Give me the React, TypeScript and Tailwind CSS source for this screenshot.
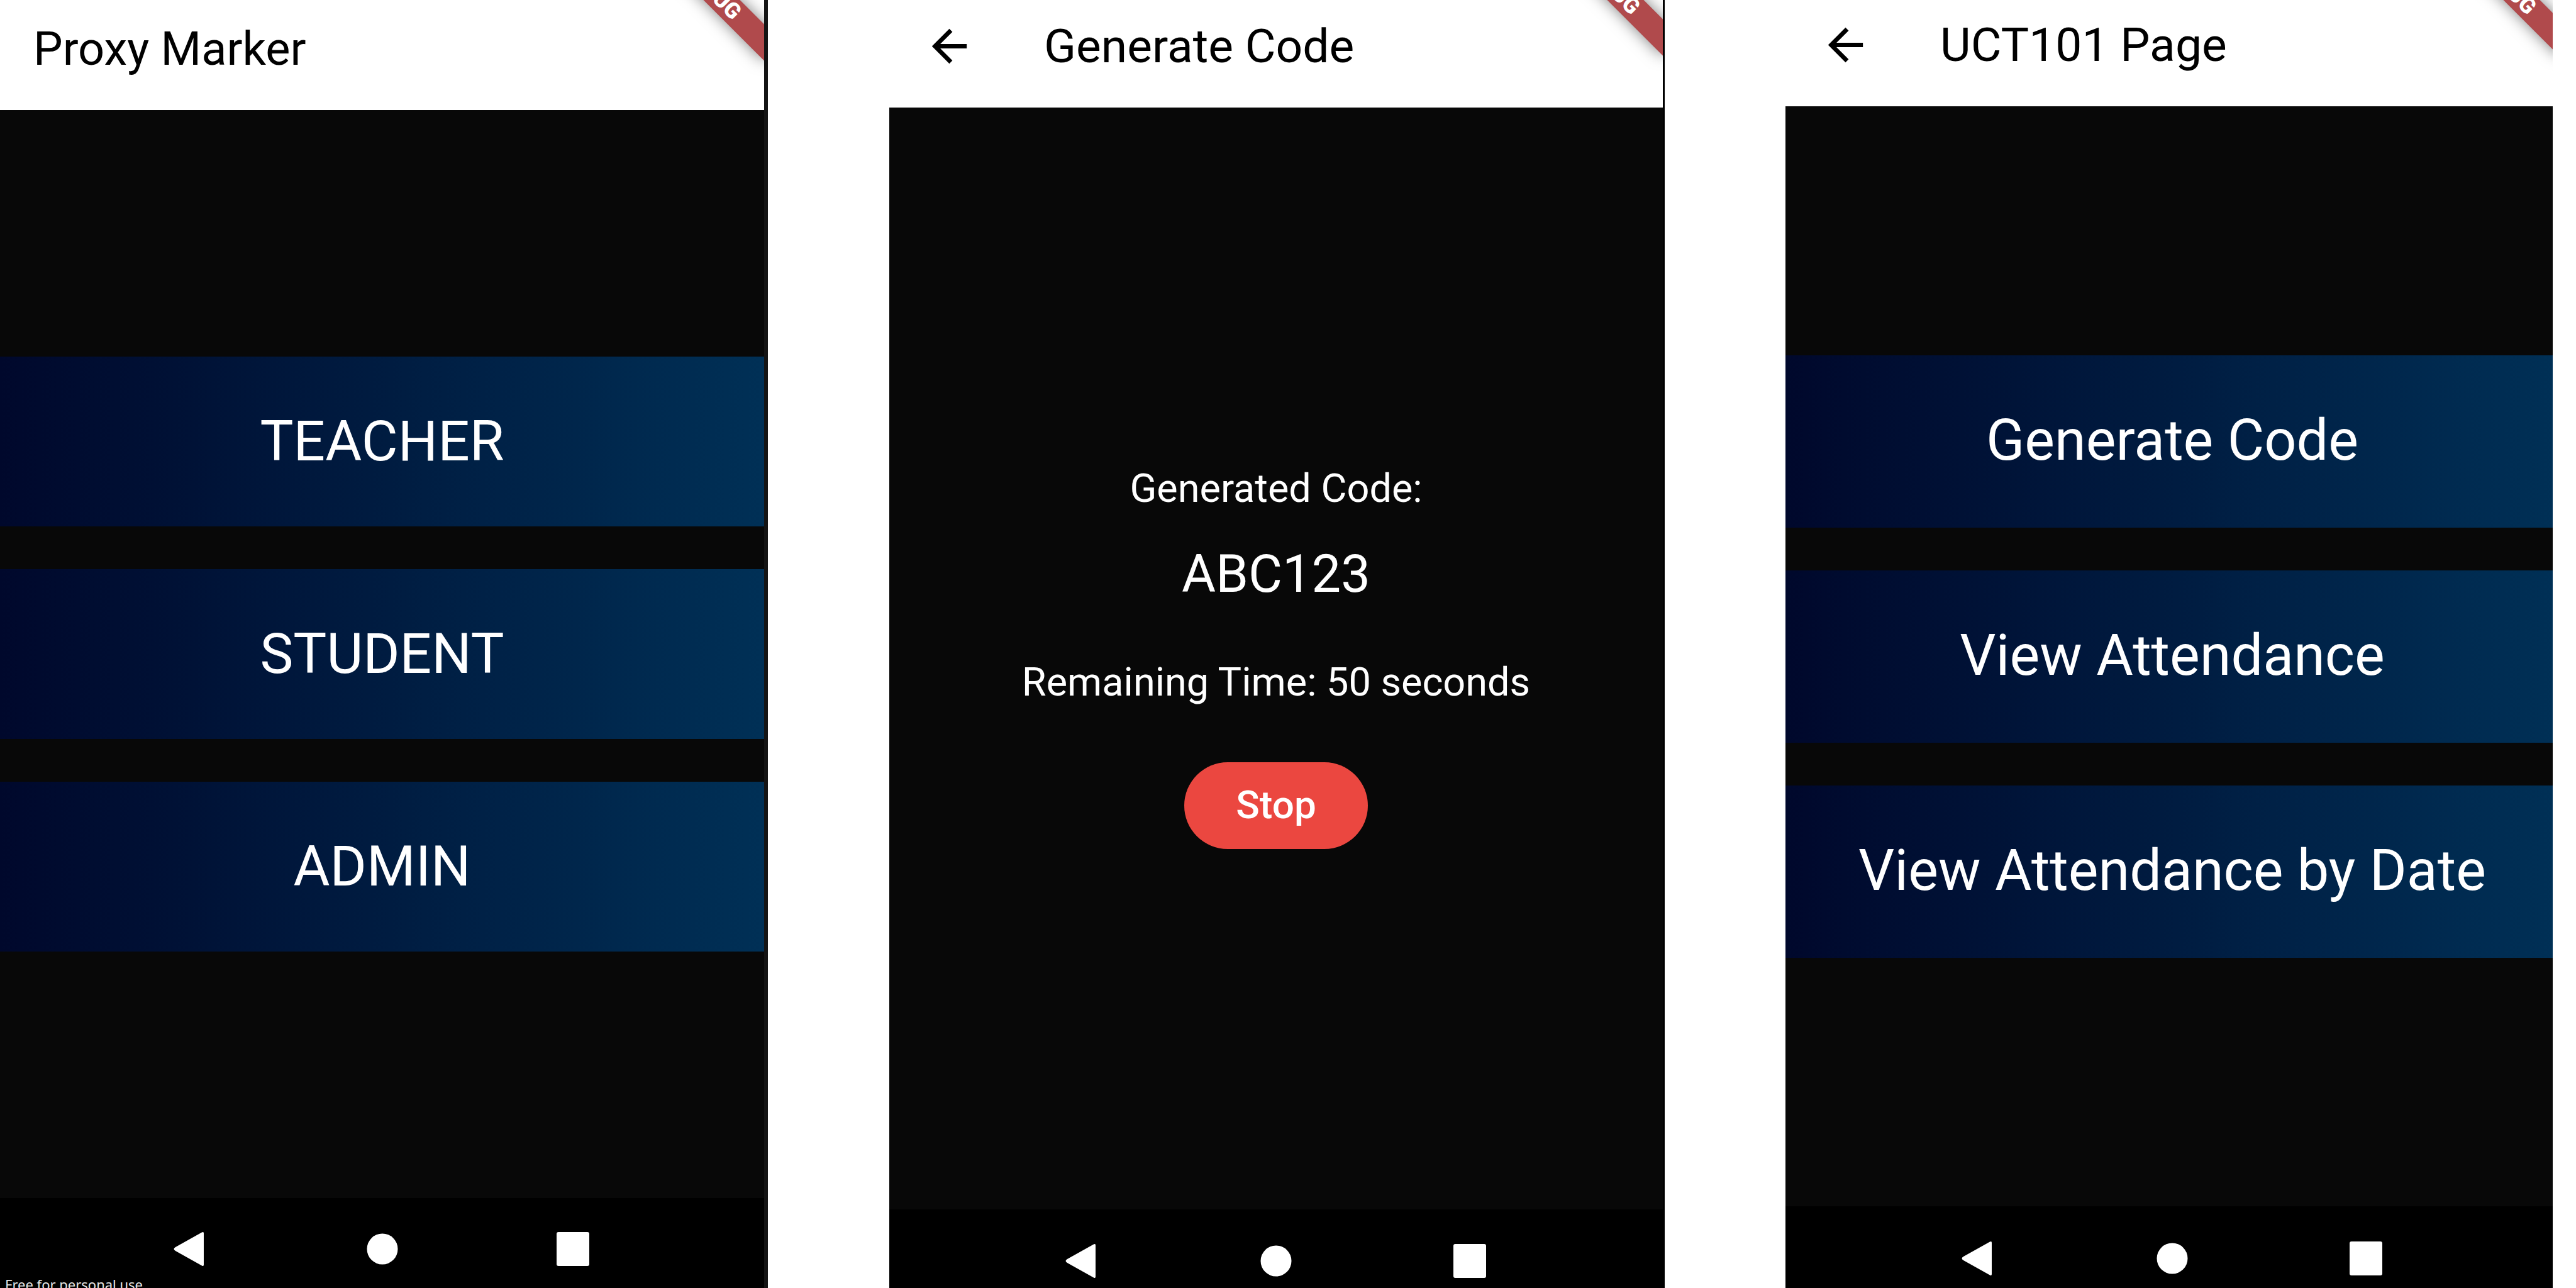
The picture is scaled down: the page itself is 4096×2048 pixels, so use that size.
import React from "react";

function NavBar({ className }: { className: string }) {
  return (
    <nav className={"flex shrink-0 bg-black px-[12.5%] " + className}>
      <button type="button" aria-label="Back" className="flex flex-1 justify-center">
        <svg viewBox="0 0 64 56" className="h-14 w-16 fill-white">
          <path d="M49 1.5Q52 0 52 3V53Q52 56 49 54.5L7 31Q2 28 7 25Z" />
        </svg>
      </button>
      <button type="button" aria-label="Home" className="flex flex-1 justify-center">
        <svg viewBox="0 0 64 56" className="h-14 w-16 fill-white">
          <circle cx="32" cy="28" r="24.5" />
        </svg>
      </button>
      <button type="button" aria-label="Recent apps" className="flex flex-1 justify-center">
        <svg viewBox="0 0 64 56" className="h-14 w-16 fill-white">
          <rect x="6" y="1" width="52" height="54" rx="3" />
        </svg>
      </button>
    </nav>
  );
}

function DebugBanner({ className }: { className: string }) {
  return (
    <div
      className={
        "absolute -right-[55px] flex h-[41px] w-[274px] rotate-45 items-center justify-center bg-[#b04a4c] text-[35px] leading-none font-black text-white shadow-[0_0_24px_rgba(0,0,0,0.5)] " +
        className
      }
    >
      DEBUG
    </div>
  );
}

function BackButton() {
  return (
    <button type="button" aria-label="Go back" className="flex w-[191px] shrink-0 justify-center">
      <svg viewBox="0 0 24 24" className="size-[83px] fill-black">
        <path d="M20 11H7.83l5.59-5.59L12 4l-8 8 8 8 1.41-1.41L7.83 13H20v-2z" />
      </svg>
    </button>
  );
}

function Tile({ label, className }: { label: string; className: string }) {
  return (
    <button
      type="button"
      className={
        "flex w-full items-center justify-center bg-linear-to-r from-[#00082c] to-[#003056] pb-0.5 leading-none text-white " +
        className
      }
    >
      {label}
    </button>
  );
}

export default function App() {
  return (
    <div className="grid h-screen grid-cols-[1221fr_193fr_1233fr_192fr_1220fr_37fr] overflow-hidden bg-white font-[Roboto,sans-serif]">
      <section className="relative flex flex-col overflow-hidden border-r-6 border-[#141414] bg-[#080808]">
        <header className="relative flex h-[175px] shrink-0 items-start overflow-hidden bg-white px-[53px] pt-[34px]">
          <h1 className="text-[74px] leading-[88px] text-black">Proxy Marker</h1>
          <DebugBanner className="-top-[35px]" />
        </header>
        <main className="flex flex-1 flex-col justify-center gap-[68px]">
          <Tile label="TEACHER" className="h-[270px] text-[89px]" />
          <Tile label="STUDENT" className="h-[270px] text-[89px]" />
          <Tile label="ADMIN" className="h-[270px] text-[89px]" />
        </main>
        <NavBar className="h-[143px] pt-[53px]" />
        <p className="absolute -bottom-[10px] left-2 font-['Noto_Sans',sans-serif] text-[22px] leading-[32px] whitespace-nowrap text-[#e6e6e6]">
          Free for personal use
        </p>
      </section>

      <div />

      <section className="flex flex-col overflow-hidden border-r-3 border-black bg-[#080808]">
        <header className="relative flex h-[171px] shrink-0 items-start overflow-hidden bg-white pt-[29px]">
          <div className="flex items-center gap-[55px]">
            <BackButton />
            <h1 className="text-[75px] leading-[88px] text-black">Generate Code</h1>
          </div>
          <DebugBanner className="-top-[43px]" />
        </header>
        <main className="flex flex-1 flex-col items-center justify-center pb-1 text-white">
          <p className="text-[63px] leading-[72px]">Generated Code:</p>
          <p className="mt-[51px] text-[83px] leading-[98px]">ABC123</p>
          <p className="mt-[87px] text-[63px] leading-[72px]">Remaining Time: 50 seconds</p>
          <button
            type="button"
            className="mt-[91px] flex h-[138px] w-[292px] items-center justify-center rounded-full bg-[#eb4740] pb-0.5 text-[62px] leading-none font-medium text-white"
          >
            Stop
          </button>
        </main>
        <NavBar className="h-[125px] pt-[54px]" />
      </section>

      <div />

      <section className="overflow-hidden bg-[#080808]">
        <div className="flex h-full w-[calc(100%+10px)] flex-col">
          <header className="relative flex h-[169px] shrink-0 items-start overflow-hidden bg-white pt-[27px]">
            <div className="flex items-center gap-[55px]">
              <BackButton />
              <h1 className="text-[75px] leading-[88px] text-black">UCT101 Page</h1>
            </div>
            <DebugBanner className="-top-[43px]" />
          </header>
          <main className="flex flex-1 flex-col justify-center gap-[68px]">
            <Tile label="Generate Code" className="h-[274px] text-[90px]" />
            <Tile label="View Attendance" className="h-[274px] text-[90px]" />
            <Tile label="View Attendance by Date" className="h-[274px] text-[90px]" />
          </main>
          <NavBar className="h-[130px] pt-[55px]" />
        </div>
      </section>

      <div />
    </div>
  );
}
